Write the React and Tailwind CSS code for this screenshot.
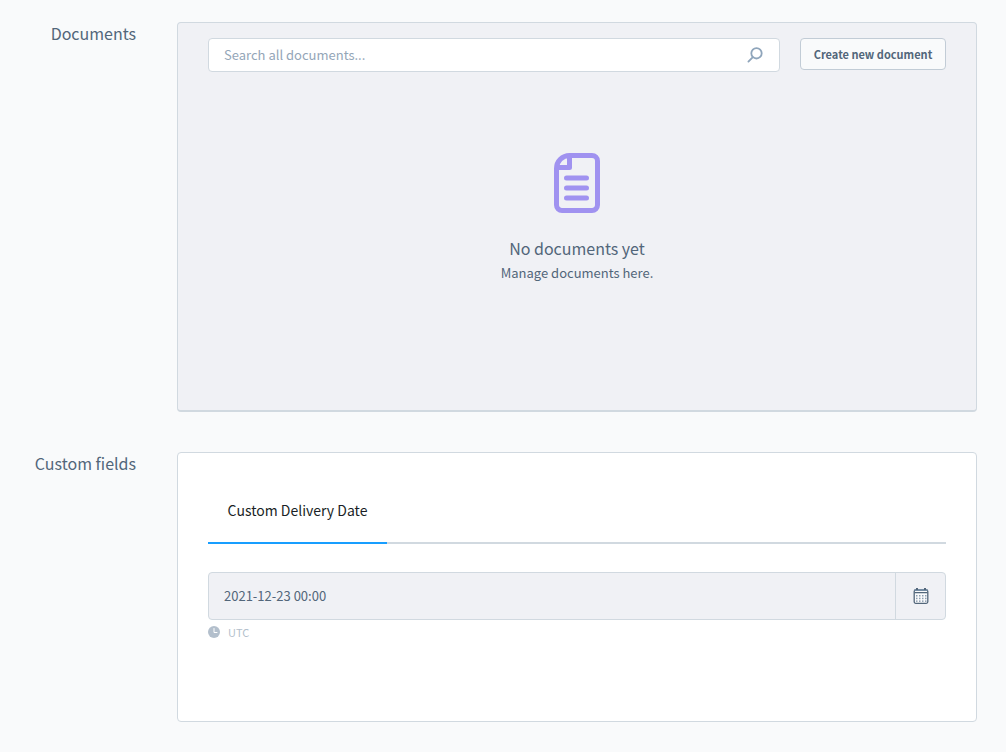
import { useState } from "react";

function DocumentIcon() {
  return (
    <svg width="46" height="60" viewBox="0 0 46 60" fill="none" stroke="#a092f0" strokeWidth="5" aria-hidden="true">
      <path d="M15.500 2.500H38a5.500 5.500 0 0 1 5.500 5.500V52a5.500 5.500 0 0 1-5.500 5.500H8A5.500 5.500 0 0 1 2.500 52V15.500a13 13 0 0 1 13-13Z" />
      <path d="M15.500 3v11.500H3" strokeLinejoin="round" />
      <path d="M12.500 25h20M12.500 35h20M12.500 45h20" strokeLinecap="round" />
    </svg>
  );
}

function SearchIcon() {
  return (
    <svg width="16" height="16" viewBox="0 0 16 16" fill="none" stroke="#8fa5bb" strokeWidth="1.800" strokeLinecap="round" aria-hidden="true">
      <circle cx="9.500" cy="6.300" r="5.200" />
      <path d="M5.600 10.300 1.400 14.600" />
    </svg>
  );
}

const calendarDots = [0, 1, 2, 3].flatMap((col) => [0, 1, 2].map((row) => ({ x: 3 + col * 3, y: 7 + row * 2.7 })));

function CalendarIcon() {
  return (
    <svg width="16" height="16" viewBox="0 0 16 16" fill="none" aria-hidden="true">
      <rect x="1.200" y="2" width="13.600" height="13.300" rx="1.500" fill="#f9fafb" stroke="#52667a" strokeWidth="1.300" />
      <path d="M1.500 2h13" stroke="#758ca3" strokeWidth="2" />
      <path d="M1.500 4.700h13" stroke="#52667a" strokeWidth="1.200" />
      <path d="M3 0h2v2H3zM11 0h2v2h-2z" fill="#52667a" />
      {calendarDots.map((d) => (
        <rect key={`${d.x}-${d.y}`} x={d.x} y={d.y} width="1.500" height="1.500" fill="#8c9db0" />
      ))}
    </svg>
  );
}

function ClockIcon() {
  return (
    <svg width="12" height="12" viewBox="0 0 12 12" fill="none" aria-hidden="true">
      <circle cx="6" cy="6" r="6" fill="#b3bfcc" />
      <path d="M6 2.500V6.500H9" stroke="#fff" strokeWidth="1" strokeLinecap="round" />
    </svg>
  );
}

function Section({ title, children }) {
  return (
    <section className="flex gap-[41px]">
      <h2 className="w-34 shrink-0 text-right text-base leading-[22px] text-[#52667a]">{title}</h2>
      {children}
    </section>
  );
}

export default function App() {
  const [query, setQuery] = useState("");
  const [date, setDate] = useState("2021-12-23 00:00");

  return (
    <main className="flex min-h-screen flex-col gap-10 bg-[#f9fafb] py-[22px] pr-[29px] font-['Noto_Sans_CJK_SC','Noto_Sans',sans-serif] text-[#52667a]">
      <Section title="Documents">
        <div className="flex min-h-[390px] min-w-0 flex-1 flex-col rounded border border-b-2 border-[#d1d9e0] bg-[#f0f1f5] px-[30px] pt-[15px]">
          <div className="flex items-start gap-5">
            <div className="flex h-[34px] min-w-0 flex-1 items-center rounded border border-[#d1d9e0] bg-white pr-4 pl-[15px]">
              <input
                type="text"
                aria-label="Search all documents"
                value={query}
                onChange={(e) => setQuery(e.target.value)}
                placeholder="Search all documents..."
                className="min-w-0 flex-1 bg-transparent text-[13px] leading-6 outline-none placeholder:text-[#94a6b8]"
              />
              <SearchIcon />
            </div>
            <button type="button" className="h-8 w-[146px] rounded border border-[#c2ccd6] bg-[#f9fafb] text-[11px] leading-4 font-bold whitespace-nowrap">
              Create new document
            </button>
          </div>
          <div className="flex flex-col items-center pt-[81px] text-center">
            <DocumentIcon />
            <h3 className="mt-6 text-base leading-[22px]">No documents yet</h3>
            <p className="mt-1 text-[13px] leading-5">Manage documents here.</p>
          </div>
        </div>
      </Section>

      <Section title="Custom fields">
        <div className="min-h-[270px] min-w-0 flex-1 rounded border border-[#d1d9e0] bg-white px-[30px] pt-[25px]">
          <div role="tablist" className="flex border-b-2 border-[#d1d9e0]">
            <button type="button" role="tab" aria-selected="true" className="-mb-0.5 h-[66px] w-[179px] border-b-2 border-[#189eff] text-sm leading-6 text-[#1a1f26]">
              Custom Delivery Date
            </button>
          </div>
          <div className="mt-7 flex h-12 overflow-hidden rounded border border-[#d1d9e0] bg-[#f0f1f5]">
            <input
              type="text"
              aria-label="Custom Delivery Date"
              value={date}
              onChange={(e) => setDate(e.target.value)}
              className="min-w-0 flex-1 bg-transparent px-[15px] text-[13px] leading-6 outline-none"
            />
            <button type="button" aria-label="Open calendar" className="flex w-[50px] items-center justify-center border-l border-[#d1d9e0]">
              <CalendarIcon />
            </button>
          </div>
          <div className="mt-1 flex items-center gap-2 text-[11px] leading-4 text-[#b3bfcc]">
            <ClockIcon />
            <span>UTC</span>
          </div>
        </div>
      </Section>
    </main>
  );
}
